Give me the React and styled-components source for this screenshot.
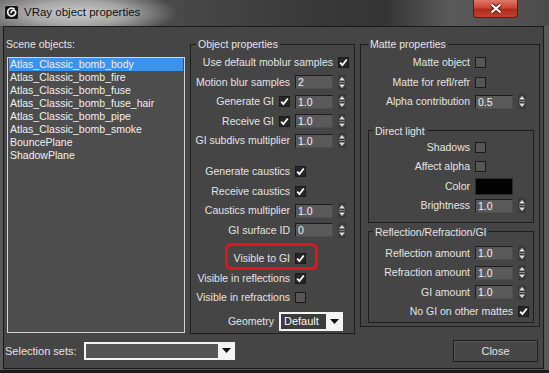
import React from 'react';
import styled, { createGlobalStyle } from 'styled-components';

const Global = createGlobalStyle`
  html, body {
    margin: 0;
    padding: 0;
    background: #2a2a2a;
    overflow: hidden;
  }
  * { box-sizing: border-box; }
`;

const Window = styled.div`
  width: 549px;
  height: 373px;
  display: flex;
  flex-direction: column;
  background: #585858;
  border-bottom: 3px solid #1c1c1c;
  font-family: "Liberation Sans", Arial, sans-serif;
  font-size: 10.5px;
  color: #e4e4e4;
`;

const TitleBar = styled.div`
  height: 26px;
  flex: none;
  display: flex;
  align-items: flex-start;
  background:
    radial-gradient(ellipse 100px 24px at 78px 13px, rgba(210, 210, 210, 0.95) 0%, rgba(190, 190, 190, 0.75) 50%, rgba(160, 160, 160, 0) 100%),
    linear-gradient(90deg, #6a6a6a 0%, #4a4a4a 30%, #3a3a3a 55%, #343434 70%, #5a5a5a 82%, #4c4c4c 100%);
`;

const AppIcon = styled.svg`
  margin: 5px 0 0 4px;
  flex: none;
`;

const Title = styled.span`
  margin: 5px 0 0 5px;
  font-size: 11.5px;
  line-height: 14px;
  color: #111;
`;

const CloseX = styled.div`
  margin: 0 31px 0 auto;
  width: 45px;
  height: 18px;
  display: flex;
  align-items: center;
  justify-content: center;
  border: 1px solid #5c1a12;
  border-top: none;
  border-radius: 0 0 4px 4px;
  background: linear-gradient(#e0786a 0%, #cc4434 45%, #b02a1a 55%, #c24330 100%);
`;

const Client = styled.div`
  flex: 1;
  margin: 0 5px 1px 3px;
  border: 1px solid #1a1a1a;
  background: #454545;
  display: grid;
  grid-template-columns: 179px 165px 180px;
  grid-template-rows: auto 22px;
  column-gap: 5px;
  row-gap: 6px;
  align-content: start;
  padding: 10px 0 0 2px;
`;

const LeftCol = styled.div`
  display: flex;
  flex-direction: column;
`;

const Caption = styled.span`
  line-height: 14px;
  white-space: nowrap;
`;

const ObjectList = styled.div`
  margin: 6px 0 0 1px;
  width: 178px;
  height: 276px;
  border: 1px solid #d4d4d4;
  background: #4d4d4d;
  padding: 0 1px;
`;

const ListItem = styled.div`
  line-height: 13px;
  padding-left: 1px;
  white-space: nowrap;
  color: #f0f0f0;
  background: ${p => (p.$selected ? '#3a93ee' : 'transparent')};
`;

const Group = styled.fieldset`
  margin: ${p => p.$margin || '0'};
  padding: ${p => p.$pad || '0'};
  border: 1px solid #1e1e1e;
  min-width: 0;
  align-self: ${p => p.$align || 'stretch'};
`;

const Legend = styled.legend`
  padding: 0 2px;
  margin-left: ${p => p.$indent}px;
  line-height: ${p => p.$lh || 14}px;
  white-space: nowrap;
`;

const Section = styled.div`
  margin-top: ${p => p.$top || 0}px;
`;

const Row = styled.div`
  position: relative;
  display: grid;
  grid-template-columns: ${p => p.$cols};
  column-gap: 5px;
  align-items: center;
  height: 19.5px;
  padding-right: ${p => p.$pr || 0}px;
  margin-top: ${p => p.$top || 0}px;
`;

const Label = styled.span`
  grid-column: 1 / ${p => p.$to || 2};
  text-align: right;
  white-space: nowrap;
  line-height: 13px;
`;

const Box = styled.span`
  grid-column: ${p => p.$at};
  width: 11px;
  height: 11px;
  border: 1px solid #1a1a1a;
  background: ${p => (p.$checked ? '#262626' : '#565656')};
  display: flex;
  align-items: center;
  justify-content: center;
`;

const Field = styled.span`
  grid-column: ${p => p.$at};
  height: 14px;
  border-top: 1px solid #1c1c1c;
  border-left: 1px solid #1c1c1c;
  border-bottom: 1px solid #4e4e4e;
  border-right: 1px solid #4e4e4e;
  background: #5a5a5a;
  color: #f2f2f2;
  line-height: 12px;
  padding-left: 2px;
`;

const SpinBox = styled.svg`
  grid-column: ${p => p.$at};
  display: block;
`;

const Swatch = styled.span`
  grid-column: ${p => p.$at};
  height: 17px;
  background: #030303;
  border: 1px solid #2a2a2a;
`;

const Combo = styled.span`
  grid-column: ${p => p.$at};
  width: ${p => p.$w}px;
  height: ${p => p.$h}px;
  display: flex;
  border: 1px solid #f4f4f4;
  background: #f4f4f4;
`;

const ComboValue = styled.span`
  flex: 1;
  background: ${p => p.$bg};
  color: #fafafa;
  line-height: ${p => p.$h - 2}px;
  padding-left: 3px;
  border: 1px solid #f4f4f4;
  font-size: 11px;
`;

const ComboArrow = styled.span`
  width: 15px;
  display: flex;
  align-items: center;
  justify-content: center;
`;

const Highlight = styled.span`
  position: absolute;
  left: 34px;
  top: -6px;
  width: 93px;
  height: 27px;
  border: 3px solid #e5141c;
  border-radius: 6px;
  pointer-events: none;
`;

const Footer = styled.div`
  grid-column: 1 / -1;
  display: flex;
  align-items: center;
`;

const FooterLabel = styled.span`
  width: 79px;
  margin-left: -1px;
  white-space: nowrap;
  font-size: 11px;
`;

const CloseButton = styled.button`
  margin: 0 2px 0 auto;
  width: 85px;
  height: 22px;
  border: 1px solid #1e1e1e;
  box-shadow: inset 1px 1px 0 #575757;
  background: #474747;
  color: #e4e4e4;
  font-family: "Liberation Sans", Arial, sans-serif;
  font-size: 11px;
  padding: 0;
`;

const MID = '1fr 11px 38px 8px';
const RIGHT = '1fr 38px 8px';

function Check({ at, checked }) {
  return (
    <Box $at={at} $checked={checked}>
      {checked && (
        <svg width="9" height="9" viewBox="0 0 9 9">
          <path d="M1.2 4.6 L3.4 7 L7.8 1.5" fill="none" stroke="#fff" strokeWidth="1.8" />
        </svg>
      )}
    </Box>
  );
}

function Spinner({ at }) {
  return (
    <SpinBox $at={at} width="8" height="15" viewBox="0 0 8 15">
      <rect x="0" y="0" width="8" height="15" fill="#3a3a3a" />
      <path d="M1 5.5 L4 2 L7 5.5 Z" fill="#dcdcdc" />
      <path d="M1 9.5 L7 9.5 L4 13 Z" fill="#dcdcdc" />
      <rect x="1" y="7" width="6" height="1" fill="#8a8a8a" />
    </SpinBox>
  );
}

function Arrow() {
  return (
    <svg width="9" height="5" viewBox="0 0 9 5">
      <path d="M0 0 L9 0 L4.5 5 Z" fill="#111" />
    </svg>
  );
}

const objects = [
  'Atlas_Classic_bomb_body',
  'Atlas_Classic_bomb_fire',
  'Atlas_Classic_bomb_fuse',
  'Atlas_Classic_bomb_fuse_hair',
  'Atlas_Classic_bomb_pipe',
  'Atlas_Classic_bomb_smoke',
  'BouncePlane',
  'ShadowPlane',
];

export default function App() {
  return (
    <>
      <Global />
      <Window>
        <TitleBar>
          <AppIcon width="15" height="15" viewBox="0 0 15 15">
            <rect x="0.5" y="0.5" width="14" height="14" rx="2" fill="#161616" stroke="#9a9a9a" />
            <path d="M10.6 4.4 A4 4 0 1 0 11.2 9 A2.3 2.3 0 1 0 7.2 8.2" fill="none" stroke="#f2f2f2" strokeWidth="1.7" />
          </AppIcon>
          <Title>VRay object properties</Title>
          <CloseX>
            <svg width="14" height="11" viewBox="0 0 14 11">
              <path d="M2.5 1.5 L11.5 9.5 M11.5 1.5 L2.5 9.5" stroke="#5a1208" strokeWidth="4" />
              <path d="M2.5 1.5 L11.5 9.5 M11.5 1.5 L2.5 9.5" stroke="#fff" strokeWidth="2.2" />
            </svg>
          </CloseX>
        </TitleBar>

        <Client>
          <LeftCol>
            <Caption>Scene objects:</Caption>
            <ObjectList>
              {objects.map((name, i) => (
                <ListItem key={name} $selected={i === 0}>{name}</ListItem>
              ))}
            </ObjectList>
          </LeftCol>

          <Group $pad="2px 8px 1px 0">
            <Legend $indent={5}>Object properties</Legend>
            <Section>
              <Row $cols={MID}>
                <Label $to={4}>Use default moblur samples</Label>
                <Check at={4} checked />
              </Row>
              <Row $cols={MID}>
                <Label $to={3}>Motion blur samples</Label>
                <Field $at={3}>2</Field>
                <Spinner at={4} />
              </Row>
              <Row $cols={MID}>
                <Label>Generate GI</Label>
                <Check at={2} checked />
                <Field $at={3}>1.0</Field>
                <Spinner at={4} />
              </Row>
              <Row $cols={MID}>
                <Label>Receive GI</Label>
                <Check at={2} checked />
                <Field $at={3}>1.0</Field>
                <Spinner at={4} />
              </Row>
              <Row $cols={MID}>
                <Label $to={3}>GI subdivs multiplier</Label>
                <Field $at={3}>1.0</Field>
                <Spinner at={4} />
              </Row>
            </Section>
            <Section $top={11.5}>
              <Row $cols={MID}>
                <Label $to={3}>Generate caustics</Label>
                <Check at={3} checked />
              </Row>
              <Row $cols={MID}>
                <Label $to={3}>Receive caustics</Label>
                <Check at={3} checked />
              </Row>
              <Row $cols={MID}>
                <Label $to={3}>Caustics multiplier</Label>
                <Field $at={3}>1.0</Field>
                <Spinner at={4} />
              </Row>
              <Row $cols={MID}>
                <Label $to={3}>GI surface ID</Label>
                <Field $at={3}>0</Field>
                <Spinner at={4} />
              </Row>
            </Section>
            <Section $top={9}>
              <Row $cols={MID}>
                <Label $to={3}>Visible to GI</Label>
                <Check at={3} checked />
                <Highlight />
              </Row>
              <Row $cols={MID}>
                <Label $to={3}>Visible in reflections</Label>
                <Check at={3} checked />
              </Row>
              <Row $cols={MID}>
                <Label $to={3}>Visible in refractions</Label>
                <Check at={3} />
              </Row>
            </Section>
            <Row $cols={MID} $top={4.5}>
              <Label>Geometry</Label>
              <Combo $at="2 / 5" $w={64} $h={19}>
                <ComboValue $bg="#3c3c3c" $h={17}>Default</ComboValue>
                <ComboArrow><Arrow /></ComboArrow>
              </Combo>
            </Row>
          </Group>

          <Group $pad="2px 5px 3px 0" $align="start">
            <Legend $indent={7}>Matte properties</Legend>
            <Row $cols={RIGHT} $pr={8}>
              <Label>Matte object</Label>
              <Check at={2} />
            </Row>
            <Row $cols={RIGHT} $pr={8}>
              <Label>Matte for refl/refr</Label>
              <Check at={2} />
            </Row>
            <Row $cols={RIGHT} $pr={8}>
              <Label>Alpha contribution</Label>
              <Field $at={2}>0.5</Field>
              <Spinner at={3} />
            </Row>

            <Group $margin="13px 0 0 7px" $pad="1px 7px 6px 0">
              <Legend $indent={4} $lh={12}>Direct light</Legend>
              <Row $cols={RIGHT}>
                <Label>Shadows</Label>
                <Check at={2} />
              </Row>
              <Row $cols={RIGHT}>
                <Label>Affect alpha</Label>
                <Check at={2} />
              </Row>
              <Row $cols={RIGHT}>
                <Label>Color</Label>
                <Swatch $at={2} />
              </Row>
              <Row $cols={RIGHT}>
                <Label>Brightness</Label>
                <Field $at={2}>1.0</Field>
                <Spinner at={3} />
              </Row>
            </Group>

            <Group $margin="3px 0 0 7px" $pad="6px 7px 0 0">
              <Legend $indent={4} $lh={12}>Reflection/Refraction/GI</Legend>
              <Row $cols={RIGHT}>
                <Label>Reflection amount</Label>
                <Field $at={2}>1.0</Field>
                <Spinner at={3} />
              </Row>
              <Row $cols={RIGHT}>
                <Label>Refraction amount</Label>
                <Field $at={2}>1.0</Field>
                <Spinner at={3} />
              </Row>
              <Row $cols={RIGHT}>
                <Label>GI amount</Label>
                <Field $at={2}>1.0</Field>
                <Spinner at={3} />
              </Row>
              <Row $cols={RIGHT}>
                <Label $to={3}>No GI on other mattes</Label>
                <Check at={3} checked />
              </Row>
            </Group>
          </Group>

          <Footer>
            <FooterLabel>Selection sets:</FooterLabel>
            <Combo $w={151} $h={18}>
              <ComboValue $bg="#555555" $h={16} />
              <ComboArrow><Arrow /></ComboArrow>
            </Combo>
            <CloseButton>Close</CloseButton>
          </Footer>
        </Client>
      </Window>
    </>
  );
}
